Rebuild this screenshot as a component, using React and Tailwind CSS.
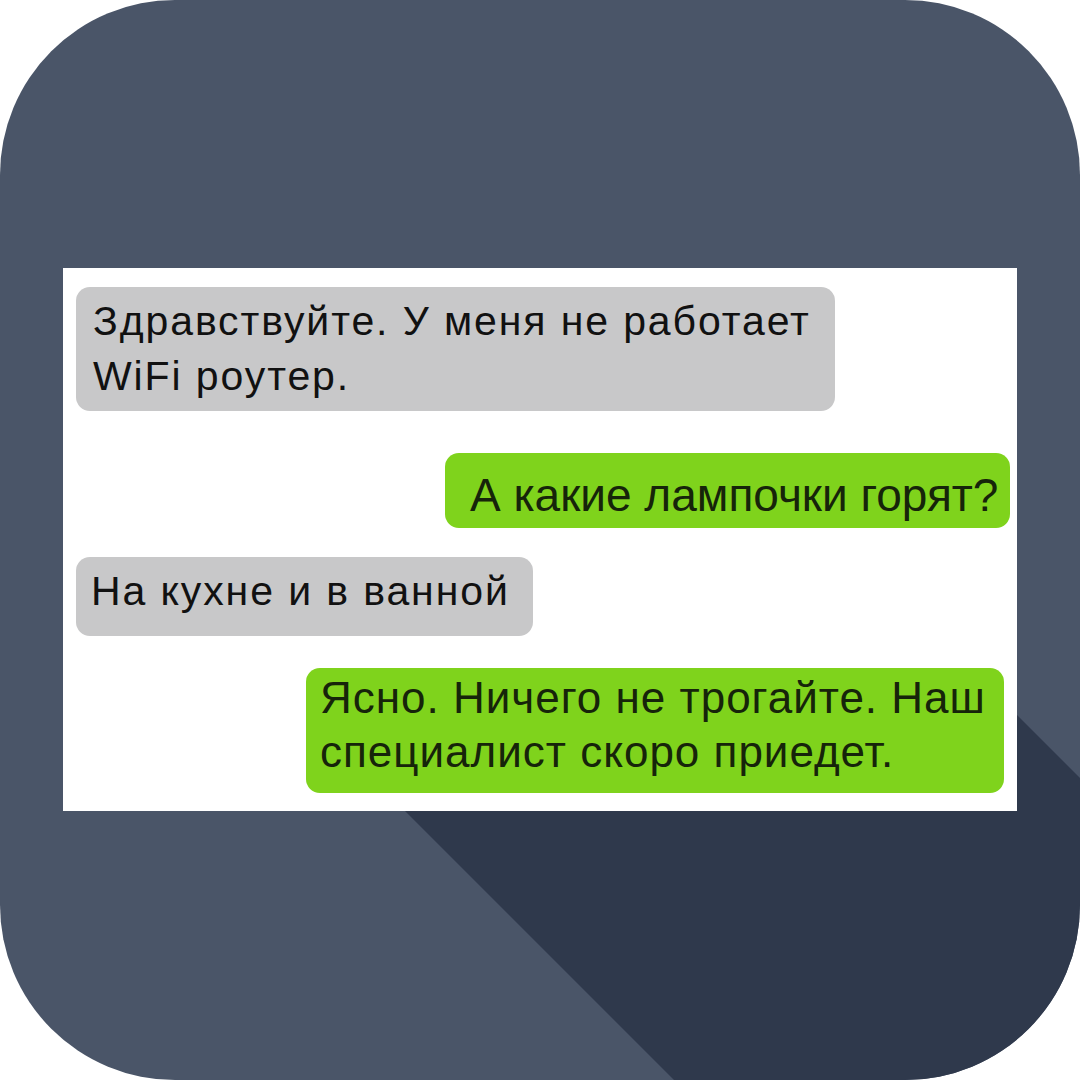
import React from 'react'

const FONT = { fontFamily: '"Liberation Sans", Arial, sans-serif' }

export default function App() {
  return (
    <div className="w-[1080px] h-[1080px] bg-white">
      <div className="relative w-full h-full rounded-[175px] bg-[#4a5568] overflow-hidden pt-[268px] pl-[63px]">
        {/* long shadow */}
        <svg className="absolute inset-0" width="1080" height="1080" viewBox="0 0 1080 1080">
          <polygon points="405,811 1017,811 1017,715 1080,778 1080,1080 674,1080" fill="#2f394c" />
        </svg>

        {/* chat card */}
        <div className="relative w-[954px] h-[543px] bg-white flex flex-col pt-[19px]" style={FONT}>
          <div className="ml-[13px] w-[759px] h-[124px] rounded-[14px] bg-[#c8c8c9] pl-[17px] pt-[7px] text-[41px] leading-[55px] tracking-[1.9px] text-[#111]">
            Здравствуйте. У меня не работает
            <br />
            WiFi роутер.
          </div>

          <div className="mt-[42px] ml-[382px] w-[565px] h-[75px] rounded-[14px] bg-[#7fd31c] pl-[25px] pt-[10px] flex items-center text-[46px] text-[#16240a]">
            А какие лампочки горят?
          </div>

          <div className="mt-[29px] ml-[13px] w-[457px] h-[79px] rounded-[14px] bg-[#c8c8c9] pl-[15px] pb-[10px] flex items-center text-[41px] tracking-[1.9px] text-[#111]">
            На кухне и в ванной
          </div>

          <div className="mt-[32px] ml-[243px] w-[698px] h-[125px] rounded-[14px] bg-[#7fd31c] pl-[14px] pt-[3px] text-[44px] leading-[54px] tracking-[1px] text-[#16240a]">
            Ясно. Ничего не трогайте. Наш
            <br />
            специалист скоро приедет.
          </div>
        </div>
      </div>
    </div>
  )
}
